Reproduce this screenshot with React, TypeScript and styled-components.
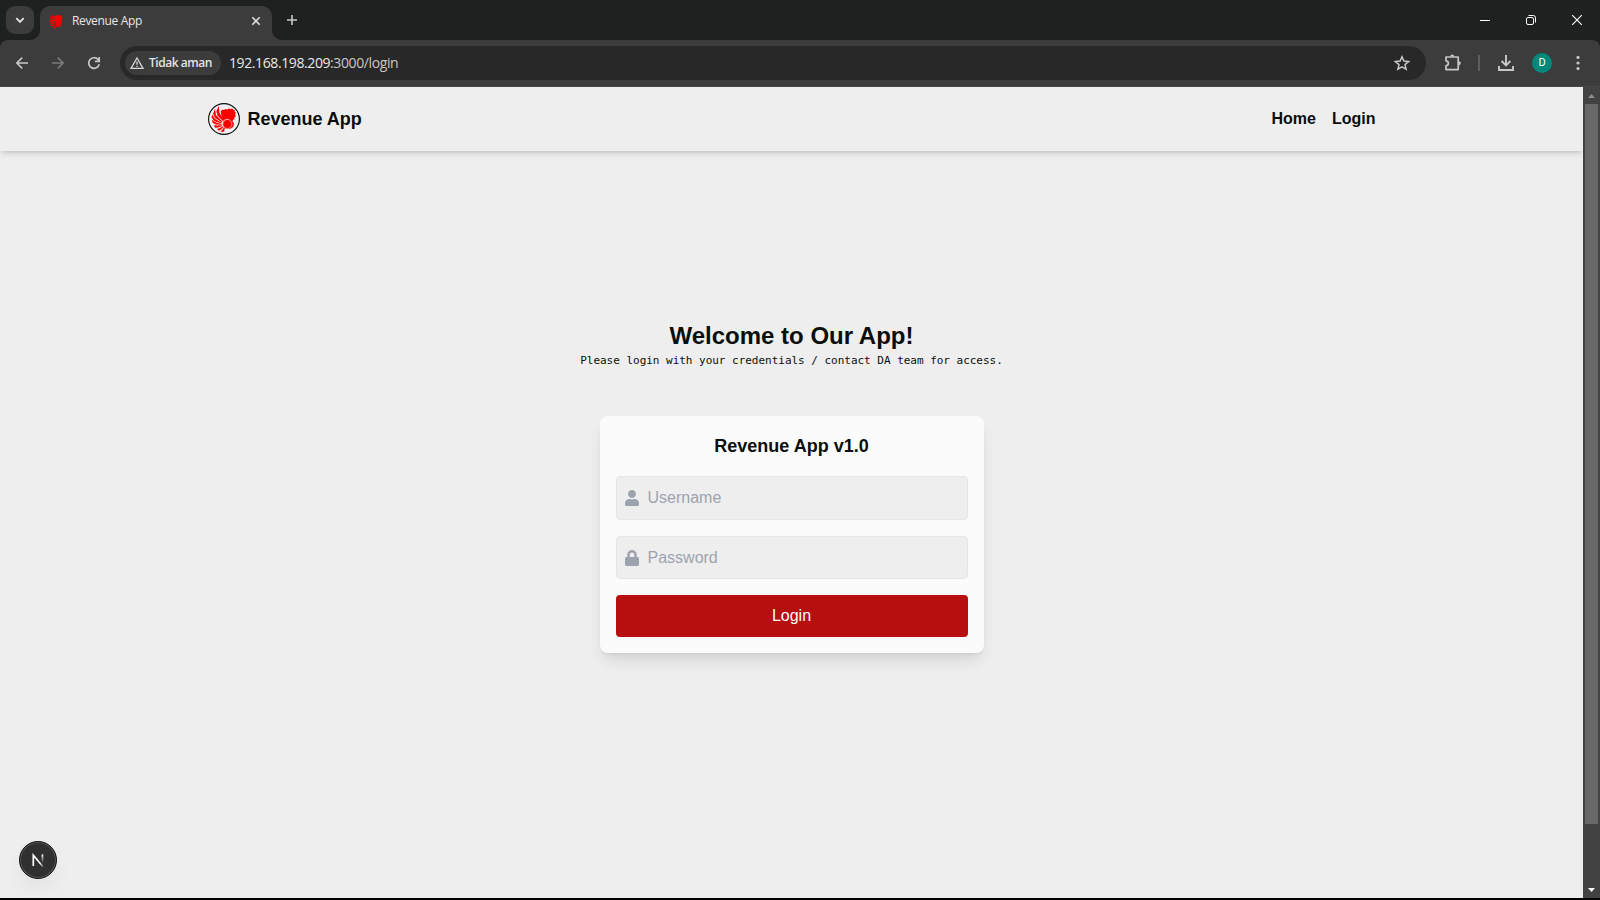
import React from 'react';
import styled, { createGlobalStyle } from 'styled-components';

const GlobalStyle = createGlobalStyle`
  * { box-sizing: border-box; }
  body { margin: 0; background: #000; overflow: hidden; }
`;

const uiFont = `"Open Sans", "Noto Sans", sans-serif`;
const pageFont = `"Liberation Sans", Arial, sans-serif`;

const Window = styled.div`
  width: 1600px;
  height: 900px;
  display: flex;
  flex-direction: column;
  background: #000;
  overflow: hidden;
`;

const TabStrip = styled.div`
  height: 40px;
  display: flex;
  align-items: flex-start;
  padding: 6px 0 0 6px;
  background: #1f2120;
  font-family: ${uiFont};
`;

const TabSearch = styled.div`
  width: 28px;
  height: 28px;
  border-radius: 9px;
  background: #3c3c3c;
  display: grid;
  place-items: center;
`;

const Tab = styled.div`
  position: relative;
  width: 232px;
  height: 34px;
  margin-left: 6px;
  padding: 0 8px 5px 9px;
  display: flex;
  align-items: center;
  border-radius: 10px 10px 0 0;
  background: #3c3c3c;

  &::before,
  &::after {
    content: '';
    position: absolute;
    bottom: 0;
    width: 10px;
    height: 10px;
  }
  &::before {
    left: -10px;
    background: radial-gradient(circle at 0 0, transparent 9.5px, #3c3c3c 10.5px);
  }
  &::after {
    right: -10px;
    background: radial-gradient(circle at 100% 0, transparent 9.5px, #3c3c3c 10.5px);
  }
`;

const TabTitle = styled.span`
  flex: 1;
  margin-left: 9px;
  padding-top: 1px;
  color: #e6e6e6;
  font-size: 12px;
  line-height: 16px;
  letter-spacing: -0.34px;
`;

const NewTab = styled.div`
  width: 28px;
  height: 28px;
  margin-left: 6px;
  display: grid;
  place-items: center;
`;

const WindowControls = styled.div`
  margin: -6px 0 0 auto;
  height: 40px;
  display: flex;
`;

const WindowControl = styled.div`
  width: 46px;
  height: 40px;
  display: grid;
  place-items: center;
`;

const ToolbarBack = styled.div`
  background: #1f2120;
`;

const Toolbar = styled.div`
  height: 47px;
  display: flex;
  align-items: center;
  padding: 0 8px 1px 12px;
  background: #3c3c3c;
  border-bottom: 1px solid #474747;
  border-radius: 8px 8px 0 0;
  font-family: ${uiFont};
`;

const ToolIcon = styled.div<{ $width: number }>`
  width: ${(p) => p.$width}px;
  height: 24px;
  flex: none;
  display: grid;
  place-items: center;
`;

const Omnibox = styled.div`
  width: 1306px;
  height: 34px;
  flex: none;
  margin-left: 16px;
  padding: 0 12px 0 5px;
  display: flex;
  align-items: center;
  border-radius: 17px;
  background: #282828;
`;

const SecurityChip = styled.div`
  width: 96px;
  height: 24px;
  padding-left: 5px;
  display: flex;
  align-items: center;
  gap: 5px;
  border-radius: 12px;
  background: #3c3c3c;
  color: #e3e3e3;
  font-size: 12px;
  font-weight: 600;
  letter-spacing: -0.45px;
  white-space: nowrap;
`;

const Url = styled.div`
  flex: 1;
  margin-left: 8px;
  color: #c7c7c7;
  font-size: 14px;
  line-height: 20px;
  letter-spacing: -0.4px;

  b {
    color: #e8e8e8;
    font-weight: 400;
  }
`;

const ToolDivider = styled.div`
  width: 2px;
  height: 16px;
  margin-right: 12px;
  background: #5e5e5e;
`;

const Avatar = styled.div`
  width: 20px;
  height: 20px;
  border-radius: 50%;
  background: #00897b;
  color: #fff;
  display: grid;
  place-items: center;
  font: 400 11px/20px Roboto, sans-serif;
`;

const Viewport = styled.div`
  height: 811px;
  display: flex;
`;

const Page = styled.div`
  position: relative;
  width: 1583px;
  display: flex;
  flex-direction: column;
  overflow: hidden;
  background: #eeeeee;
  color: #0a0f0d;
  font-family: ${pageFont};
`;

const Header = styled.header`
  height: 64px;
  flex: none;
  background: #eeeeee;
  box-shadow: 0 4px 6px -1px rgba(0, 0, 0, 0.1), 0 2px 4px -2px rgba(0, 0, 0, 0.15);
`;

const HeaderInner = styled.div`
  width: 1200px;
  height: 100%;
  margin: 0 auto;
  padding: 0 16px;
  display: flex;
  align-items: center;
  justify-content: space-between;
`;

const Brand = styled.div`
  display: flex;
  align-items: center;
  gap: 8px;
  font-size: 18px;
  line-height: 28px;
  font-weight: 700;
`;

const Nav = styled.nav`
  display: flex;
  gap: 16px;
  font-size: 16px;
  line-height: 24px;
  font-weight: 700;
`;

const Main = styled.main`
  display: flex;
  flex-direction: column;
  align-items: center;
  padding-top: 169px;
`;

const Title = styled.h1`
  margin: 0;
  font-size: 24px;
  line-height: 32px;
  font-weight: 700;
`;

const Subtitle = styled.p`
  margin: 1px 0 47px;
  font: 400 11px/16px "DejaVu Sans Mono", monospace;
  letter-spacing: -0.02px;
`;

const Card = styled.form`
  width: 384px;
  padding: 16px;
  display: flex;
  flex-direction: column;
  gap: 16px;
  border-radius: 8px;
  background: #fbfbfb;
  box-shadow: 0 10px 15px -3px rgba(0, 0, 0, 0.1), 0 4px 6px -4px rgba(0, 0, 0, 0.1);
`;

const CardTitle = styled.h2`
  margin: 0;
  text-align: center;
  font-size: 18px;
  line-height: 28px;
  font-weight: 700;
`;

const Field = styled.label<{ $height: number }>`
  height: ${(p) => p.$height}px;
  padding: 0 8.5px;
  display: flex;
  align-items: center;
  gap: 8.5px;
  border: 1px solid #e6e6e7;
  border-radius: 4px;
  background: #eeeeee;
  color: #9ca3af;
  font-size: 16px;
  line-height: 24px;
`;

const Submit = styled.button`
  height: 42px;
  padding: 0 0 1px;
  border: 0;
  border-radius: 4px;
  background: #b70f0e;
  color: #fbfbfb;
  font: 400 16px/24px ${pageFont};
`;

const DevBadge = styled.div`
  position: absolute;
  left: 19px;
  bottom: 19px;
  width: 38px;
  height: 38px;
  display: grid;
  place-items: center;
  border: 1px solid #141414;
  border-radius: 50%;
  background: #303030;
  box-shadow: inset 0 0 0 1px #585858, 0 12px 24px -4px rgba(0, 0, 0, 0.07);
`;

const Scrollbar = styled.div`
  width: 17px;
  display: flex;
  flex-direction: column;
  align-items: center;
  background: #424242;
`;

const ScrollArrow = styled.div`
  height: 17px;
  display: grid;
  place-items: center;
`;

const Thumb = styled.div`
  width: 13px;
  height: 720px;
  margin-bottom: auto;
  background: #686868;
`;

const LionShape = ({ ring }: { ring: string }) => (
  <g fill="#fc0000">
    <path d="M12.6 8.6 14 6.8 15.8 7 17.6 5.9 19.6 6.4 21 5.2 22.4 6.2 24.3 5.2 25.2 6.9 26.9 6.8 26.6 8.6 28 9.8 27 11.4 28 13.2 26.2 14.4 26.6 16.4 25 16.4 24.6 18.2 26 20.4 25.4 23.4 23 25.6 19.6 26 16.2 24.4 14.8 21.4 15.6 18 14 15Z" />
    <circle cx="19.4" cy="21" r="4.5" stroke={ring} strokeWidth=".8" />
    <path d="M10.9 2.8 11.3 9.4 15.6 17 14.9 18 9.6 12.8 8.3 8.2Z" />
    <path d="M7 5.8 7.9 12 14.3 18.4 13.9 19.2 7 15 5.1 10.4Z" />
    <path d="M4.2 11.4 6.8 15.8 13.7 19.7 13.6 20.4 6.4 18.2 3.5 14.6Z" />
    <path d="M3.8 16.8 7.2 19.3 13.6 21 13.7 21.7 7.8 21.5 4.6 19.8Z" />
    <path d="M5.7 22.3 9.4 22.6 13.9 22.2 14.2 23 10.2 24.5 7.2 24.8Z" />
    <path d="M8.8 25.9 11.8 25 14.7 23.4 15.3 24.1 12.9 26.8 11 27.8Z" />
    <path d="M12.5 28.4 14.4 26.7 15.8 24.6 16.8 25.1 16.3 28.2 14.8 29.1Z" />
  </g>
);

const LogoIcon = () => (
  <svg width="32" height="32" viewBox="0 0 32 32">
    <circle cx="16" cy="16" r="15.4" fill="#f1f1f1" stroke="#0a0a0a" strokeWidth="1.1" />
    <LionShape ring="#f2b0ae" />
    <path d="M15.6 17.6q2.6-1.8 5.4-1.2" fill="none" stroke="#f2b0ae" strokeWidth=".8" />
  </svg>
);

const Favicon = () => (
  <svg width="14" height="16" viewBox="3.2 2 25.6 27.5" preserveAspectRatio="none">
    <LionShape ring="#b01212" />
  </svg>
);

const Line = ({ size = 16, d, color = '#c7c7c7', w = 1.6 }: { size?: number; d: string; color?: string; w?: number }) => (
  <svg width={size} height={size} viewBox={`0 0 ${size} ${size}`} fill="none" stroke={color} strokeWidth={w}>
    <path d={d} />
  </svg>
);

const BrowserTabs = () => (
  <TabStrip>
    <TabSearch><Line d="M4.3 6.2 8 9.9l3.7-3.7" color="#e0e0e0" w={1.9} /></TabSearch>
    <Tab>
      <Favicon />
      <TabTitle>Revenue App</TabTitle>
      <Line d="m4.3 4.3 7.4 7.4m0-7.4-7.4 7.4" color="#dcdcdc" w={1.6} />
    </Tab>
    <NewTab><Line d="M8 3v10M3 8h10" w={1.6} /></NewTab>
    <WindowControls>
      <WindowControl><Line d="M3 8.5h10" color="#fff" w={1} /></WindowControl>
      <WindowControl>
        <svg width="16" height="16" viewBox="0 0 16 16" fill="none" stroke="#fff">
          <rect x="3.5" y="5.5" width="7" height="7" rx="1.5" />
          <path d="M5.5 3.5h4.8a2.2 2.2 0 0 1 2.2 2.2v4.8" />
        </svg>
      </WindowControl>
      <WindowControl><Line d="m3.2 3.2 9.6 9.6m0-9.6-9.6 9.6" color="#fff" w={1.1} /></WindowControl>
    </WindowControls>
  </TabStrip>
);

const BrowserToolbar = () => (
  <ToolbarBack>
    <Toolbar>
      <ToolIcon $width={20}><Line d="M14 8H3M8.2 2.6 2.8 8l5.4 5.4" /></ToolIcon>
      <ToolIcon $width={52}><Line d="M2 8h11M7.8 2.6 13.2 8l-5.4 5.4" color="#7b7b7b" /></ToolIcon>
      <ToolIcon $width={20}>
        <svg width="16" height="16" viewBox="0 0 16 16" fill="none" stroke="#c7c7c7" strokeWidth="1.7">
          <path d="M13.2 9.2A5.3 5.3 0 1 1 11.9 4.4L13 5.6" />
          <path d="M13.2 2v4.3H8.9" />
        </svg>
      </ToolIcon>
      <Omnibox>
        <SecurityChip>
          <svg width="14" height="14" viewBox="0 0 14 14" fill="none" stroke="#d8d8d8" strokeWidth="1.3">
            <path d="M7 2 13 12.3H1ZM7 5.5v3.3M7 9.7v1.3" />
          </svg>
          Tidak aman
        </SecurityChip>
        <Url><b>192.168.198.209</b>:3000/login</Url>
        <svg width="24" height="20" viewBox="0 0 24 20" fill="none" stroke="#c7c7c7" strokeWidth="1.5">
          <path d="m12 3.8 1.9 4.3 4.7.4-3.6 3.1 1.1 4.6-4.1-2.4-4.1 2.4L9 11.6 5.4 8.5l4.7-.4Z" />
        </svg>
      </Omnibox>
      <ToolIcon $width={52}>
        <svg width="20" height="20" viewBox="0 0 20 20" fill="none" stroke="#c7c7c7" strokeWidth="1.7" strokeLinejoin="round">
          <path d="M4 4h12.2v12.6H4v-3.8q2.4-.4 2.4-2.5T4 7.8Z" />
          <path d="M8.2 3.5a2 2 0 0 1 4 0ZM16.8 8.3a2 2 0 0 1 0 4Z" fill="#c7c7c7" stroke="none" />
        </svg>
      </ToolIcon>
      <ToolDivider />
      <ToolIcon $width={28}>
        <svg width="18" height="18" viewBox="0 0 18 18" fill="none" stroke="#c7c7c7" strokeWidth="1.9">
          <path d="M9 1v10M4.6 7 9 11.4 13.4 7M2 12v4h14v-4" />
        </svg>
      </ToolIcon>
      <ToolIcon $width={44}><Avatar>D</Avatar></ToolIcon>
      <ToolIcon $width={28}>
        <svg width="4" height="16" fill="#c7c7c7">
          <circle cx="2" cy="2.4" r="1.6" /><circle cx="2" cy="8" r="1.6" /><circle cx="2" cy="13.6" r="1.6" />
        </svg>
      </ToolIcon>
    </Toolbar>
  </ToolbarBack>
);

const UserIcon = () => (
  <svg width="14" height="16" viewBox="0 0 448 512" fill="currentColor">
    <path d="M224 256c70.7 0 128-57.3 128-128S294.7 0 224 0 96 57.3 96 128s57.3 128 128 128zm89.6 32h-16.7c-22.2 10.2-46.9 16-72.9 16s-50.6-5.8-72.9-16h-16.7C60.2 288 0 348.2 0 422.4V464c0 26.5 21.5 48 48 48h352c26.5 0 48-21.5 48-48v-41.6c0-74.2-60.2-134.4-134.4-134.4z" />
  </svg>
);

const LockIcon = () => (
  <svg width="14" height="16" viewBox="0 0 448 512" fill="currentColor">
    <path d="M400 224h-24v-72C376 68.2 307.8 0 224 0S72 68.2 72 152v72H48c-26.5 0-48 21.5-48 48v192c0 26.5 21.5 48 48 48h352c26.5 0 48-21.5 48-48V272c0-26.5-21.5-48-48-48zm-104 0H152v-72c0-39.7 32.3-72 72-72s72 32.3 72 72v72z" />
  </svg>
);

export default function App() {
  return (
    <Window>
      <GlobalStyle />
      <BrowserTabs />
      <BrowserToolbar />
      <Viewport>
        <Page>
          <Header>
            <HeaderInner>
              <Brand><LogoIcon />Revenue App</Brand>
              <Nav><span>Home</span><span>Login</span></Nav>
            </HeaderInner>
          </Header>
          <Main>
            <Title>Welcome to Our App!</Title>
            <Subtitle>Please login with your credentials / contact DA team for access.</Subtitle>
            <Card>
              <CardTitle>Revenue App v1.0</CardTitle>
              <Field $height={44}><UserIcon />Username</Field>
              <Field $height={43}><LockIcon />Password</Field>
              <Submit type="button">Login</Submit>
            </Card>
          </Main>
          <DevBadge>
            <svg width="14" height="14" viewBox="0 0 14 14" fill="none" strokeWidth="1.7">
              <defs>
                <linearGradient id="stem" x1="0" y1="0" x2="0" y2="1">
                  <stop offset="0" stopColor="#fff" /><stop offset="1" stopColor="#fff" stopOpacity="0" />
                </linearGradient>
                <linearGradient id="diagonal" x1="0" y1="0" x2="1" y2="1">
                  <stop offset=".65" stopColor="#fff" /><stop offset="1" stopColor="#fff" stopOpacity=".1" />
                </linearGradient>
              </defs>
              <path d="M2.3 13V2.2L12.4 14.2" stroke="url(#diagonal)" />
              <rect x="10.6" y="1.4" width="1.7" height="8.6" fill="url(#stem)" />
            </svg>
          </DevBadge>
        </Page>
        <Scrollbar>
          <ScrollArrow><svg width="7" height="4"><path d="M0 4 3.5 0 7 4Z" fill="#8b8b8b" /></svg></ScrollArrow>
          <Thumb />
          <ScrollArrow><svg width="7" height="4"><path d="M0 0 3.5 4 7 0Z" fill="#fff" /></svg></ScrollArrow>
        </Scrollbar>
      </Viewport>
    </Window>
  );
}
